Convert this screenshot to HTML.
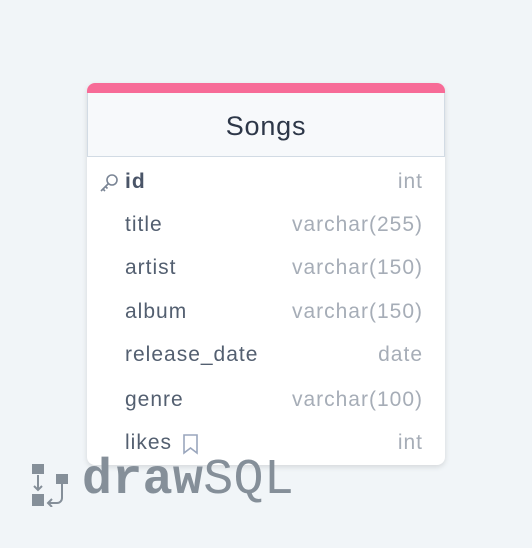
<!DOCTYPE html>
<html><head><style>
body{margin:0;width:532px;height:548px;background:#f1f5f8;position:relative;overflow:hidden;font-family:"Liberation Sans",sans-serif}
.card{position:absolute;left:87px;top:83px;width:358px;height:382px;background:#fff;border-radius:8px;box-shadow:0 2px 6px rgba(0,0,0,.12);overflow:hidden}
.bar{height:10px;background:#f76b97}
.hd{background:#f7f9fb;border:1px solid #d2dbe4;border-top:none;box-sizing:border-box;height:64px;text-align:center;line-height:66px;font-size:27px;color:#2d3748;letter-spacing:0.8px}
.row{position:absolute;left:0;right:0;height:30px;font-size:21px;color:#535f70;letter-spacing:1px}
.row .n{position:absolute;left:38px;top:0}
.row .t{position:absolute;right:22px;top:0;color:#a6adb7}
.logo{position:absolute;left:82px;top:452px;font-family:"Liberation Mono",monospace;font-size:50px;color:#858f99;letter-spacing:0.3px}
</style></head><body>
<div class="card">
<div class="bar"></div>
<div class="hd">Songs</div>
<div class="row" style="top:87px"><svg style="position:absolute;left:11px;top:2px" width="22" height="22" viewBox="0 0 22 22" fill="none" stroke="#7a8595" stroke-width="1.6"><circle cx="14" cy="8" r="5"/><path d="M10.5 11.5L3 19M5 17l2 2M7.5 14.5l2 2"/></svg><span class="n" style="font-weight:bold;color:#4a5568">id</span><span class="t">int</span></div>
<div class="row" style="top:130px"><span class="n">title</span><span class="t">varchar(255)</span></div>
<div class="row" style="top:173px"><span class="n">artist</span><span class="t">varchar(150)</span></div>
<div class="row" style="top:217px"><span class="n">album</span><span class="t">varchar(150)</span></div>
<div class="row" style="top:260px"><span class="n">release_date</span><span class="t">date</span></div>
<div class="row" style="top:305px"><span class="n">genre</span><span class="t">varchar(100)</span></div>
<div class="row" style="top:348px"><span class="n">likes</span><svg style="position:absolute;left:94px;top:2px" width="20" height="22" viewBox="0 0 20 22" fill="none" stroke="#9aa6bd" stroke-width="1.6"><path d="M3 2h13v18l-6.5-5L3 20z"/></svg><span class="t">int</span></div>
</div>
<svg style="position:absolute;left:30px;top:463px" width="40" height="44" viewBox="0 0 40 44" fill="#858f99"><rect x="2" y="1" width="12" height="10"/><rect x="2" y="31" width="12" height="12"/><rect x="26" y="11" width="12" height="10"/><path d="M8 12v14M4 23l4 4 4-4M32 21v14a5 5 0 0 1-5 5h-8M22 36l-4 4 4 4" fill="none" stroke="#858f99" stroke-width="2"/></svg>
<div class="logo"><b>draw</b>SQL</div>
</body></html>
